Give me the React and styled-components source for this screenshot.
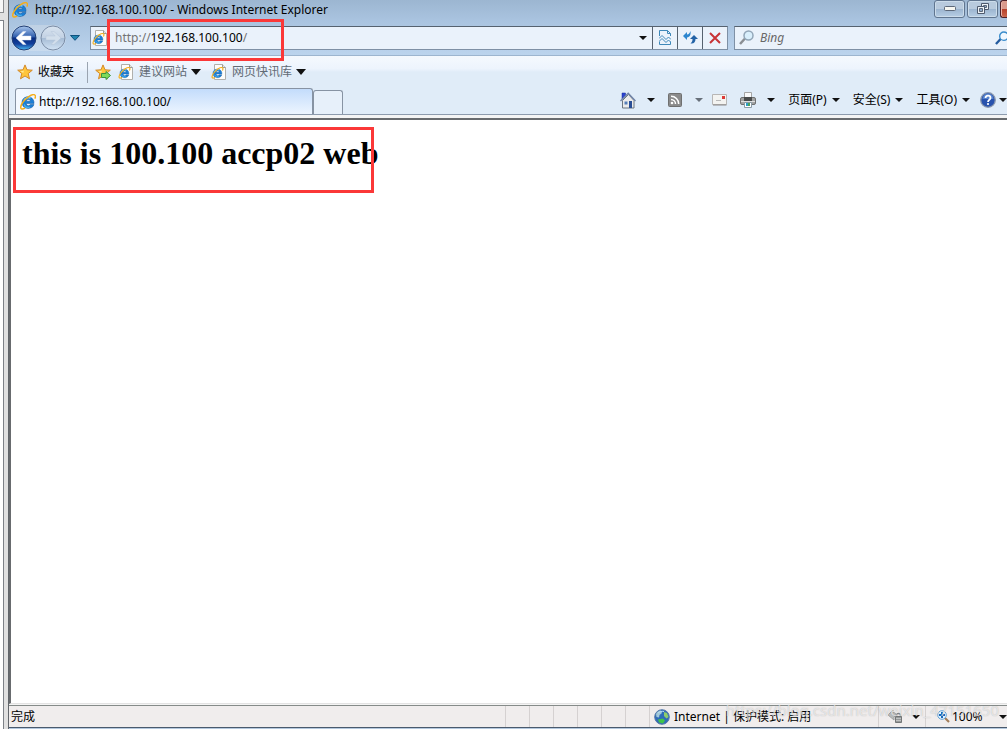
import React from "react";
import { createGlobalStyle, styled } from "styled-components";

const theme = {
  fonts: {
    ui: `"Noto Sans", "Noto Sans CJK SC", sans-serif`,
    page: `"Liberation Serif", serif`,
  },
  colors: {
    text: "#000",
    muted: "#737373",
    line: "#8793a3",
    mark: "#fb3838",
  },
};

export default function App() {
  return (
    <DesktopStyled>
      <GlobalStyle />
      <GutterStyled>
        <div className="top" />
        <div className="rest" />
      </GutterStyled>
      <WindowStyled>
        <TitleBar />
        <AddressRow />
        <FavoritesBar />
        <TabRow />
        <PageStyled>
          <h1>this is 100.100 accp02 web</h1>
          <MarkStyled $left={2} $top={7} $width={361} $height={66} />
        </PageStyled>
        <StatusBar />
      </WindowStyled>
    </DesktopStyled>
  );
}

const TitleBar = () => (
  <TitleBarStyled>
    <IeLogo size={16} />
    <span className="title">http://192.168.100.100/ - Windows Internet Explorer</span>
    <CaptionButtonStyled aria-label="Minimize">
      <svg width="12" height="6">
        <rect x="0.5" y="0.5" width="11" height="4" rx="1" fill="#f6f6f0" stroke="#5d6878" />
      </svg>
    </CaptionButtonStyled>
    <CaptionButtonStyled aria-label="Restore">
      <svg width="12" height="12" fill="none">
        <path d="M4.500.5h7v6h-7z" stroke="#4e5a6d" fill="#edf2f7" />
        <path d="M6.500 2.500h3v2h-3z" fill="#8ca9c8" stroke="#5d6878" />
        <path d="M.5 3.500h7v7h-7z" stroke="#4e5a6d" fill="#edf2f7" />
        <path d="M2.500 5.500h3v3h-3z" fill="#8ca9c8" stroke="#5d6878" />
      </svg>
    </CaptionButtonStyled>
    <CloseButtonStyled aria-label="Close window" />
  </TitleBarStyled>
);

const AddressRow = () => (
  <AddressRowStyled>
    <NavigationStyled>
      <div className="travel">
        <button aria-label="Back">
          <BackIcon />
        </button>
        <button aria-label="Forward">
          <ForwardIcon />
        </button>
      </div>
      <button aria-label="Recent pages">
        <svg width="10" height="6">
          <path d="M0.5 0.5h9L5 5.3z" fill="#2284b0" stroke="#0f527f" />
        </svg>
      </button>
    </NavigationStyled>
    <AddressStyled>
      <label htmlFor="address" aria-label="Address">
        <PageIcon />
      </label>
      <span className="scheme">http://</span>
      <input id="address" defaultValue="192.168.100.100" />
      <span>/</span>
      <button className="drop" aria-label="Show addresses">
        <Arrow />
      </button>
      <button aria-label="Compatibility view">
        <CompatIcon />
      </button>
      <button aria-label="Refresh">
        <RefreshIcon />
      </button>
      <button aria-label="Stop">
        <svg width="12" height="12">
          <path d="M1 1l10 10M11 1L1 11" stroke="#c83336" strokeWidth="2" />
        </svg>
      </button>
      <MarkStyled $left={16} $top={-8} $width={177} $height={42} />
    </AddressStyled>
    <SearchStyled>
      <Lens handle="#8b8f94" glass="#d9effc" />
      <input aria-label="Search" placeholder="Bing" />
      <button aria-label="Run search">
        <Lens handle="#235b9f" ring="#3a8dcc" glass="#f1f8ff" size={14} />
      </button>
    </SearchStyled>
  </AddressRowStyled>
);

const FavoritesBar = () => (
  <FavoritesBarStyled>
    <button className="favorites">
      <Star />
      收藏夹
    </button>
    <button className="add" aria-label="Add to favorites bar">
      <Star arrow />
    </button>
    <a href="#suggested">
      <PageIcon />
      建议网站
      <Arrow wide />
    </a>
    <a href="#slices">
      <PageIcon />
      网页快讯库
      <Arrow wide />
    </a>
  </FavoritesBarStyled>
);

const TabRow = () => (
  <TabRowStyled>
    <TabStyled>
      <IeLogo size={16} />
      http://192.168.100.100/
    </TabStyled>
    <NewTabStyled aria-label="New tab" />
    <CommandsStyled>
      <button aria-label="Home">
        <HomeIcon />
        <Arrow />
      </button>
      <button className="feeds" aria-label="Feeds">
        <RssIcon />
        <Arrow color="#68707a" />
      </button>
      <button className="mail" aria-label="Read mail">
        <MailIcon />
      </button>
      <button aria-label="Print">
        <PrinterIcon />
        <Arrow />
      </button>
      <button className="menu">
        页面(P)
        <Arrow />
      </button>
      <button className="menu">
        安全(S)
        <Arrow />
      </button>
      <button className="menu">
        工具(O)
        <Arrow />
      </button>
      <button className="help" aria-label="Help">
        <HelpIcon />
        <Arrow />
      </button>
    </CommandsStyled>
  </TabRowStyled>
);

const StatusBar = () => (
  <StatusBarStyled>
    <span className="state">完成</span>
    {[1, 2, 3, 4, 5, 6].map((pane) => (
      <span className="pane" key={pane} />
    ))}
    <span className="zone">
      <GlobeIcon />
      Internet | 保护模式: 启用
    </span>
    <button className="privacy" aria-label="Privacy">
      <LockIcon />
      <Arrow />
    </button>
    <button className="zoom">
      <ZoomIcon />
      100%
      <Arrow />
    </button>
    <WatermarkStyled>https://blog.csdn.net/weixin_47151650</WatermarkStyled>
  </StatusBarStyled>
);

const Arrow = ({ wide, color = "#111" }) => (
  <svg width={wide ? 10 : 8} height={wide ? 6 : 4} viewBox="0 0 8 4" preserveAspectRatio="none">
    <path d="M0 0h8L4 4z" fill={color} />
  </svg>
);

const IeShape = () => (
  <>
    <path
      d="M14 9.600H6.300c.3 2.600 3 2.700 4 1H14C12.200 16.300 2 15.700 2 8.500 2 .7 14.600.7 14 9.600zM6.300 7.200h4.200c-.3-2.300-3.900-2.300-4.200 0z"
      fill="#1b7fd6"
      stroke="#0e559c"
      strokeWidth="0.500"
      fillRule="evenodd"
    />
    <path d="M3.800 6.600C5 3.900 8 3 10.500 4" stroke="#83d3fa" strokeWidth="1.400" fill="none" />
    <path d="M4.200 10.500c.8 2.500 3.300 3.300 5.600 2.600" stroke="#46b2ef" strokeWidth="1.200" fill="none" />
    <path
      d="M5 14C.4 16.800-.6 13.500 2.600 8.700 6 3.700 12.500-.6 14.800 1c1 .7.700 2.300 0 3.700"
      stroke="#f4ae1a"
      strokeWidth="1.500"
      fill="none"
    />
  </>
);

const IeLogo = ({ size }) => (
  <svg width={size} height={size} viewBox="0 0 16 16">
    <IeShape />
  </svg>
);

const PageIcon = () => (
  <svg width="16" height="16" viewBox="0 0 16 16">
    <path d="M3.500.5h8l3 3v12h-11z" fill="#fdfdfb" stroke="#b0b0ac" />
    <path d="M11.500.5v3h3" fill="#e6e6e0" stroke="#9c9c98" />
    <g transform="translate(0.500 3) scale(.74)">
      <IeShape />
    </g>
  </svg>
);

const BackIcon = () => (
  <svg width="26" height="26" viewBox="0 0 26 26">
    <defs>
      <linearGradient id="back" x2="0" y2="1">
        <stop stopColor="#a9c7ed" />
        <stop offset=".45" stopColor="#315fae" />
        <stop offset=".5" stopColor="#092d80" />
        <stop offset=".75" stopColor="#123f9c" />
        <stop offset="1" stopColor="#49baf4" />
      </linearGradient>
    </defs>
    <circle cx="13" cy="13" r="12" fill="url(#back)" stroke="#223f75" />
    <path d="M5 13l7-6.500h3L10.800 11H20v4h-9.200l4.200 4.500h-3z" fill="#fff" stroke="#d9e5f6" strokeWidth=".5" />
  </svg>
);

const ForwardIcon = () => (
  <svg width="26" height="26" viewBox="0 0 26 26">
    <defs>
      <linearGradient id="forward" x2="0" y2="1">
        <stop stopColor="#d9e4f0" />
        <stop offset=".48" stopColor="#c3d2e4" />
        <stop offset=".5" stopColor="#a5bbd4" />
        <stop offset="1" stopColor="#d3e4f5" />
      </linearGradient>
    </defs>
    <circle cx="13" cy="13" r="12" fill="url(#forward)" stroke="#7b8da6" />
    <path d="M21 13l-7-6.500h-3l4.200 4.500H6v4h9.200L11 19.500h3z" fill="#d3dfec" stroke="#b4c5d8" strokeWidth=".5" />
  </svg>
);

const CompatIcon = () => (
  <svg width="12" height="15" viewBox="0 0 12 15" fill="none" stroke="#3e88b9">
    <path d="M.5 6V.5h8l3 3V6M8.500.5v3h3M.5 11.500v3h11v-3" />
    <path d="M0 8.500l3-3 4 4 2.500-2.500L12 9.500M0 11.500l3-3 4 4 2.500-2.500 2.500 2.500" />
  </svg>
);

const RefreshIcon = () => (
  <svg width="15" height="13" viewBox="0 0 15 13">
    <path d="M0 5l4-4v2.500c2 0 2.500-1.500 3.500-3.500.5 3.500-.5 6-3.500 6.500V9z" fill="#2c86cf" />
    <path d="M15 8l-4-4v0L7 8h2.500c0 2-.5 3.300-2 4.500 3.500.5 5-1.500 5-4.500z" fill="#2262a6" />
  </svg>
);

const Lens = ({ handle, ring = "#92a6b8", glass, size = 15 }) => (
  <svg width={size} height={size} viewBox="0 0 15 15">
    <path d="M1 14l5-5.500" stroke={handle} strokeWidth="2.500" />
    <circle cx="9.500" cy="5.500" r="4.500" fill={glass} stroke={ring} strokeWidth="1.500" />
  </svg>
);

const Star = ({ arrow }) => (
  <svg width="16" height="16" viewBox="0 0 16 16">
    <path
      d="M8 .9l2 4.900 5.300.4-4.100 3.400 1.300 5.200L8 12l-4.500 2.800 1.300-5.200L.7 6.200 6 5.800z"
      fill="#ffc63b"
      stroke="#d38a2a"
    />
    <path d="M8 3l-1.200 3.700-3.500.3 2.900 2z" fill="#ffe994" />
    {arrow && <path d="M6.500 9.500H11v-2l4.500 4-4.500 4v-2H6.500z" fill="#7fda58" stroke="#3a9440" />}
  </svg>
);

const HomeIcon = () => (
  <svg width="16" height="17" viewBox="0 0 16 17">
    <path d="M2.500 8.500L8.500 2.500 14 8.500V16H2.500z" fill="#ececec" stroke="#6d7680" />
    <path d="M2 1h3.500v2.500L2 7z" fill="#2b43cf" stroke="#1a2c99" strokeWidth=".5" />
    <path d="M.5 9L8.200 1.200 15.500 9" fill="none" stroke="#6f82a6" strokeWidth="1.300" />
    <path d="M9 9h3v7H9z" fill="#294e95" />
    <path d="M4.500 9.500h3v3h-3z" fill="#567eb7" />
  </svg>
);

const RssIcon = () => (
  <svg width="14" height="14" viewBox="0 0 14 14">
    <rect x=".5" y=".5" width="13" height="13" rx="1" fill="#8b8b8b" stroke="#707070" />
    <circle cx="4" cy="10" r="1.300" fill="#fff" />
    <path d="M3 6.500a4.500 4.500 0 014.500 4.500M3 3.300a7.700 7.700 0 017.700 7.700" stroke="#fff" strokeWidth="1.500" fill="none" />
  </svg>
);

const MailIcon = () => (
  <svg width="15" height="12" viewBox="0 0 15 12">
    <path d="M.5.5h14v10H.5z" fill="#f3f3f1" stroke="#b8b6b5" />
    <path d="M1 11h13.500" stroke="#8b8887" />
    <path d="M10 2h3v3h-3z" fill="#dd3b36" />
    <path d="M4 6.500h5" stroke="#b8b8b8" />
  </svg>
);

const PrinterIcon = () => (
  <svg width="16" height="16" viewBox="0 0 16 16">
    <path d="M4.500.5h7V6h-7z" fill="#fafafa" stroke="#a5a5a5" />
    <rect x=".5" y="5.500" width="15" height="7" rx="1.500" fill="#a2a3a3" stroke="#707171" />
    <path d="M4 5h8v4H4z" fill="#4a4c4c" />
    <path d="M1 9.500h14" stroke="#e0e0e0" />
    <path d="M4.500 10.500h7v5h-7z" fill="#fff" stroke="#8b9ba5" />
    <path d="M6 11h2v3H6z" fill="#2d9bc8" />
    <path d="M8 11h2v3H8z" fill="#4ba35b" />
  </svg>
);

const HelpIcon = () => (
  <svg width="16" height="16" viewBox="0 0 16 16">
    <circle cx="8" cy="8" r="7.300" fill="#2852ad" stroke="#8c99ae" strokeWidth="1.300" />
    <path d="M2.500 7a5.500 5.500 0 0111 0z" fill="#5682cd" />
    <path d="M5.500 6C5.500 2.800 10.500 3 10.500 6c0 1.900-2.500 1.700-2.500 4" fill="none" stroke="#fff" strokeWidth="1.800" />
    <circle cx="8" cy="12" r="1.100" fill="#fff" />
  </svg>
);

const GlobeIcon = () => (
  <svg width="16" height="16" viewBox="0 0 16 16">
    <circle cx="8" cy="8" r="7.300" fill="#2f6cb8" stroke="#5478a8" />
    <path d="M2 5c1-2 3-3.500 5-3.500L8 4 5.500 6 5 8.500 2.500 8z" fill="#a3c9d8" />
    <path d="M10 3l3 1 1.500 4-2 1.500L10 7z" fill="#8fce6a" />
    <path d="M4 10.500l5-1 2 2-2 3-4-1z" fill="#3fc44b" />
    <path d="M4 4c1.500-1.500 4-2 6-1.500" stroke="#b7ddf4" fill="none" />
  </svg>
);

const LockIcon = () => (
  <svg width="16" height="15" viewBox="0 0 16 15">
    <path d="M1 6l5-5v2.500c2 0 3 1 3 2.500L7 8v3z" fill="#b9bbbb" stroke="#a0a2a2" />
    <path d="M9.500 8V6.500a2 2 0 014 0V8" fill="none" stroke="#808384" strokeWidth="1.300" />
    <path d="M8.500 7.500h6v6h-6z" fill="#96999a" stroke="#737677" />
    <path d="M9 9.500h5M9 11.500h5" stroke="#bfc1c1" />
  </svg>
);

const ZoomIcon = () => (
  <svg width="13" height="13" viewBox="0 0 13 13">
    <path d="M8 8l4 4" stroke="#a37d58" strokeWidth="2.200" />
    <circle cx="5" cy="5" r="4.300" fill="#e6f5ff" stroke="#5f9fd4" />
    <path d="M5 2v6M2 5h6" stroke="#1768bd" strokeWidth="2" />
  </svg>
);

const GlobalStyle = createGlobalStyle`
  * {
    box-sizing: border-box;
  }

  body {
    margin: 0;
    overflow: hidden;
    color: ${theme.colors.text};
    font: 12px/16px ${theme.fonts.ui};
  }

  button,
  input {
    margin: 0;
    padding: 0;
    border: 0;
    background: none;
    color: inherit;
    font: inherit;
  }

  a {
    color: inherit;
    text-decoration: none;
  }

  svg {
    display: block;
    flex: none;
  }
`;

const DesktopStyled = styled.div`
  display: flex;
  height: 100vh;
  background: #e1e1e1;
`;

const GutterStyled = styled.div`
  flex: none;
  display: flex;
  flex-direction: column;
  gap: 7px;
  width: 9px;
  padding-right: 4px;
  border-right: 1px solid #62666b;

  .top {
    height: 13px;
    border: solid #8b8d90;
    border-width: 0 1px 1px 0;
    background: #f7f7f7;
  }

  .rest {
    flex: 1;
    border: solid #7d8187;
    border-width: 1px 1px 0 0;
    background: #fff;
  }
`;

const WindowStyled = styled.div`
  flex: 1;
  min-width: 0;
  display: flex;
  flex-direction: column;
  overflow: hidden;
  border-bottom: 1px solid #b4c8de;
  background: #e0ecf8;
  white-space: nowrap;
`;

const TitleBarStyled = styled.header`
  display: flex;
  align-items: center;
  height: 20px;
  padding-left: 3px;
  background: linear-gradient(#9cb6d1, #a9c3df);

  .title {
    flex: 1;
    padding-left: 7px;
  }
`;

const CaptionButtonStyled = styled.button`
  display: flex;
  align-items: center;
  justify-content: center;
  align-self: flex-start;
  width: 31px;
  height: 18px;
  margin-right: 2px;
  border: 1px solid #60758f;
  border-radius: 3px;
  background: linear-gradient(#b8cadd 50%, #9bb4cf 50%, #b7cee4);
  box-shadow: inset 0 0 0 1px #ccdcea;
`;

const CloseButtonStyled = styled(CaptionButtonStyled)`
  width: 7px;
  margin: 0;
  border-color: #4d2028;
  border-right: 0;
  border-radius: 3px 0 0 3px;
  background: linear-gradient(#d99a8d 50%, #b63f2a 50%, #ca664c);
  box-shadow: inset 1px 0 #e9b5a9;
`;

const AddressRowStyled = styled.div`
  display: flex;
  align-items: center;
  height: 35px;
  background: linear-gradient(#a9c3df, #bcd4ed);
`;

const NavigationStyled = styled.nav`
  display: flex;
  align-items: center;
  gap: 4px;
  width: 81px;
  padding-left: 2px;

  .travel {
    display: flex;
    gap: 3px;
    border-radius: 13px;
    background: linear-gradient(#bfd1e4, #c9dbee);
  }
`;

const AddressStyled = styled.div`
  position: relative;
  flex: 1;
  display: flex;
  align-items: center;
  height: 24px;
  border: 1px solid #7e90a5;
  border-top-color: #56626f;
  background: #eaf2fb;
  color: ${theme.colors.muted};

  label {
    padding-left: 1px;
  }

  .scheme {
    padding-left: 7px;
  }

  input {
    field-sizing: content;
    outline: 0;
    color: ${theme.colors.text};
  }

  button {
    display: flex;
    align-items: center;
    justify-content: center;
    align-self: stretch;
    width: 25px;
    border-left: 1px solid #56626f;
  }

  .drop {
    width: 18px;
    margin-left: auto;
    border: 0;
  }
`;

const SearchStyled = styled.div`
  display: flex;
  align-items: center;
  gap: 6px;
  width: 273px;
  height: 24px;
  margin-left: 6px;
  padding-left: 4px;
  border: 1px solid #7e90a5;
  border-top-color: #56626f;
  border-right: 0;
  background: #eaf2fb;

  input {
    flex: 1;
    min-width: 0;
    font-style: italic;
    outline: 0;

    &::placeholder {
      color: #686868;
    }
  }

  button {
    width: 12px;
    overflow: hidden;
  }
`;

const FavoritesBarStyled = styled.div`
  display: flex;
  align-items: center;
  height: 33px;
  padding-left: 8px;
  border-top: 1px solid #9db5cf;
  background: linear-gradient(#f5f9fe, #edf4fd 40%, #e0ecf8 50%);
  color: #626b75;

  .favorites {
    display: flex;
    align-items: center;
    gap: 5px;
    width: 71px;
    height: 21px;
    border-right: 1px solid #9aa4b0;
    color: ${theme.colors.text};
  }

  .add {
    padding: 0 7px;
  }

  a {
    display: flex;
    align-items: center;
    gap: 4px;
    margin-right: 10px;
  }

  a svg:first-child {
    margin-right: 1px;
  }
`;

const TabRowStyled = styled.div`
  display: flex;
  align-items: flex-end;
  height: 27px;
  padding-left: 6px;
  border-bottom: 1px solid #8d9bad;
`;

const TabStyled = styled.button`
  display: flex;
  align-items: center;
  gap: 3px;
  width: 298px;
  height: 26px;
  padding-left: 4px;
  border: 1px solid ${theme.colors.line};
  border-bottom: 0;
  border-radius: 3px 3px 0 0;
  background: linear-gradient(to right, #f4f9ff, transparent 50%), linear-gradient(#c3dcfb, #edf5ff);
`;

const NewTabStyled = styled.button`
  width: 30px;
  height: 24px;
  border: 1px solid ${theme.colors.line};
  border-bottom: 0;
  border-radius: 3px 3px 0 0;
  background: #e7f0fa;
`;

const CommandsStyled = styled.div`
  display: flex;
  align-items: center;
  align-self: stretch;
  gap: 13px;
  margin-left: auto;
  padding-bottom: 2px;

  button {
    display: flex;
    align-items: center;
    gap: 11px;
  }

  .feeds {
    gap: 13px;
  }

  .mail {
    margin-left: -4px;
  }

  .menu {
    gap: 5px;
  }

  .help {
    gap: 3px;
    margin-left: -3px;
  }
`;

const PageStyled = styled.main`
  position: relative;
  flex: 1;
  margin-top: 3px;
  border: solid #686b6e;
  border-width: 2px 0 0 2px;
  border-bottom: 1px solid #e3e3e3;
  outline: 3px solid #f4f4f4;
  background: #fff;

  h1 {
    margin: 15px 11px;
    font: bold 32px/36px ${theme.fonts.page};
  }
`;

const MarkStyled = styled.div`
  position: absolute;
  left: ${({ $left }) => $left}px;
  top: ${({ $top }) => $top}px;
  width: ${({ $width }) => $width}px;
  height: ${({ $height }) => $height}px;
  border: 3px solid ${theme.colors.mark};
  pointer-events: none;
`;

const StatusBarStyled = styled.footer`
  position: relative;
  display: flex;
  align-items: center;
  height: 23px;
  margin-top: 1px;
  border-top: 1px solid #858b89;
  border-bottom: 1px solid #4a5a6d;
  background: #f0eded;

  .state {
    flex: 1;
    padding-left: 2px;
  }

  .pane {
    align-self: stretch;
    width: 24px;
    border-left: 1px solid #d5d1d1;
  }

  .zone {
    display: flex;
    align-items: center;
    align-self: stretch;
    gap: 4px;
    width: 229px;
    padding-left: 4px;
    border-left: 1px solid #d5d1d1;
  }

  .privacy,
  .zoom {
    display: flex;
    align-items: center;
    align-self: stretch;
    border-left: 1px solid #d5d1d1;
  }

  .privacy {
    gap: 9px;
    width: 47px;
    padding-left: 8px;
  }

  .zoom {
    gap: 2px;
    width: 82px;
    padding-left: 11px;
    overflow: hidden;
  }

  .zoom svg:last-child {
    margin-left: auto;
  }
`;

const WatermarkStyled = styled.span`
  position: absolute;
  right: 8px;
  top: -6px;
  color: rgba(255, 255, 255, 0.6);
  font-size: 15px;
  line-height: 20px;
  text-shadow: 0 0 1px rgba(120, 120, 120, 0.5);
  pointer-events: none;
`;
